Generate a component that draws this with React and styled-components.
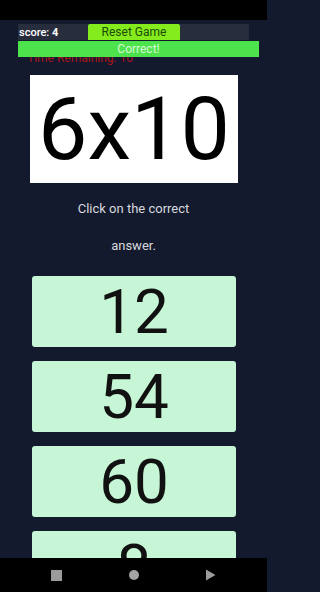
import React from 'react'
import styled, { createGlobalStyle } from 'styled-components'

const GlobalStyle = createGlobalStyle`
  html, body {
    margin: 0;
    padding: 0;
    height: 100%;
    overflow: hidden;
    background: #141a2d;
    font-family: Roboto, "Noto Sans", "Liberation Sans", sans-serif;
  }
`

const answers = [12, 54, 60, 8]

const Screen = styled.div`
  position: relative;
  width: 267px;
  height: 592px;
  overflow: hidden;
  background: #141a2d;
`

const StatusBar = styled.div`
  height: 20px;
  background: #000;
`

const Page = styled.main`
  position: relative;
  display: flex;
  flex-direction: column;
`

const TopBar = styled.div`
  display: flex;
  align-items: center;
  margin: 4px 0 0 18px;
  width: 231px;
  height: 16px;
  background: #282d3e;
`

const Score = styled.span`
  color: #fff;
  font-size: 11px;
  font-weight: 500;
  padding-left: 1px;
  width: 69px;

  b {
    font-weight: 700;
  }
`

const ResetButton = styled.button`
  width: 92px;
  height: 16px;
  padding: 0;
  border: none;
  border-radius: 2px 2px 0 0;
  background: #84ec1c;
  color: #1c4a06;
  font-family: inherit;
  font-size: 12px;
  line-height: 16px;
`

const Toast = styled.div`
  position: absolute;
  top: 21px;
  left: 18px;
  width: 241px;
  height: 16px;
  background: #4de34c;
  color: #d9f8d6;
  font-size: 12px;
  line-height: 16px;
  text-align: center;
`

const Timer = styled.p`
  margin: 0 0 0 27px;
  padding-top: 12px;
  height: 23px;
  color: #a8131c;
  font-size: 12px;
  line-height: 12px;
`

const Question = styled.div`
  margin-left: 30px;
  width: 208px;
  height: 108px;
  display: flex;
  align-items: center;
  justify-content: center;
  background: #fff;
  color: #000;
  font-size: 88px;
  line-height: 1;
`

const Prompt = styled.p`
  align-self: center;
  width: 150px;
  margin: 7px 0 0;
  color: #d6d8de;
  font-size: 13px;
  line-height: 37px;
  text-align: center;
`

const Answers = styled.div`
  display: flex;
  flex-direction: column;
  gap: 14px;
  margin: 12px 0 0 32px;
  width: 204px;
`

const AnswerButton = styled.button`
  height: 71px;
  padding: 0;
  border: none;
  border-radius: 3px;
  background: #c6f6d5;
  color: #111;
  font-family: inherit;
  font-size: 62px;
  line-height: 71px;
`

const NavBar = styled.nav`
  position: absolute;
  left: 0;
  bottom: 0;
  width: 267px;
  height: 34px;
  box-sizing: border-box;
  background: #000;
  display: flex;
  align-items: center;
  justify-content: space-between;
  padding: 0 51px;
`

const NavSquare = styled.span`
  width: 11px;
  height: 11px;
  background: #9b9b9b;
`

const NavCircle = styled.span`
  width: 10px;
  height: 10px;
  border-radius: 50%;
  background: #a3a3a3;
`

export default function App() {
  return (
    <Screen>
      <GlobalStyle />
      <StatusBar />
      <Page>
        <TopBar>
          <Score>score: <b>4</b></Score>
          <ResetButton>Reset Game</ResetButton>
        </TopBar>
        <Toast>Correct!</Toast>
        <Timer>Time Remaining: 10</Timer>
        <Question>6x10</Question>
        <Prompt>Click on the correct answer.</Prompt>
        <Answers>
          {answers.map((a) => (
            <AnswerButton key={a}>{a}</AnswerButton>
          ))}
        </Answers>
      </Page>
      <NavBar>
        <NavSquare />
        <NavCircle />
        <svg width="11" height="12" viewBox="0 0 11 12">
          <path d="M1 0.5 L10.5 6 L1 11.5 Z" fill="#9b9b9b" />
        </svg>
      </NavBar>
    </Screen>
  )
}
